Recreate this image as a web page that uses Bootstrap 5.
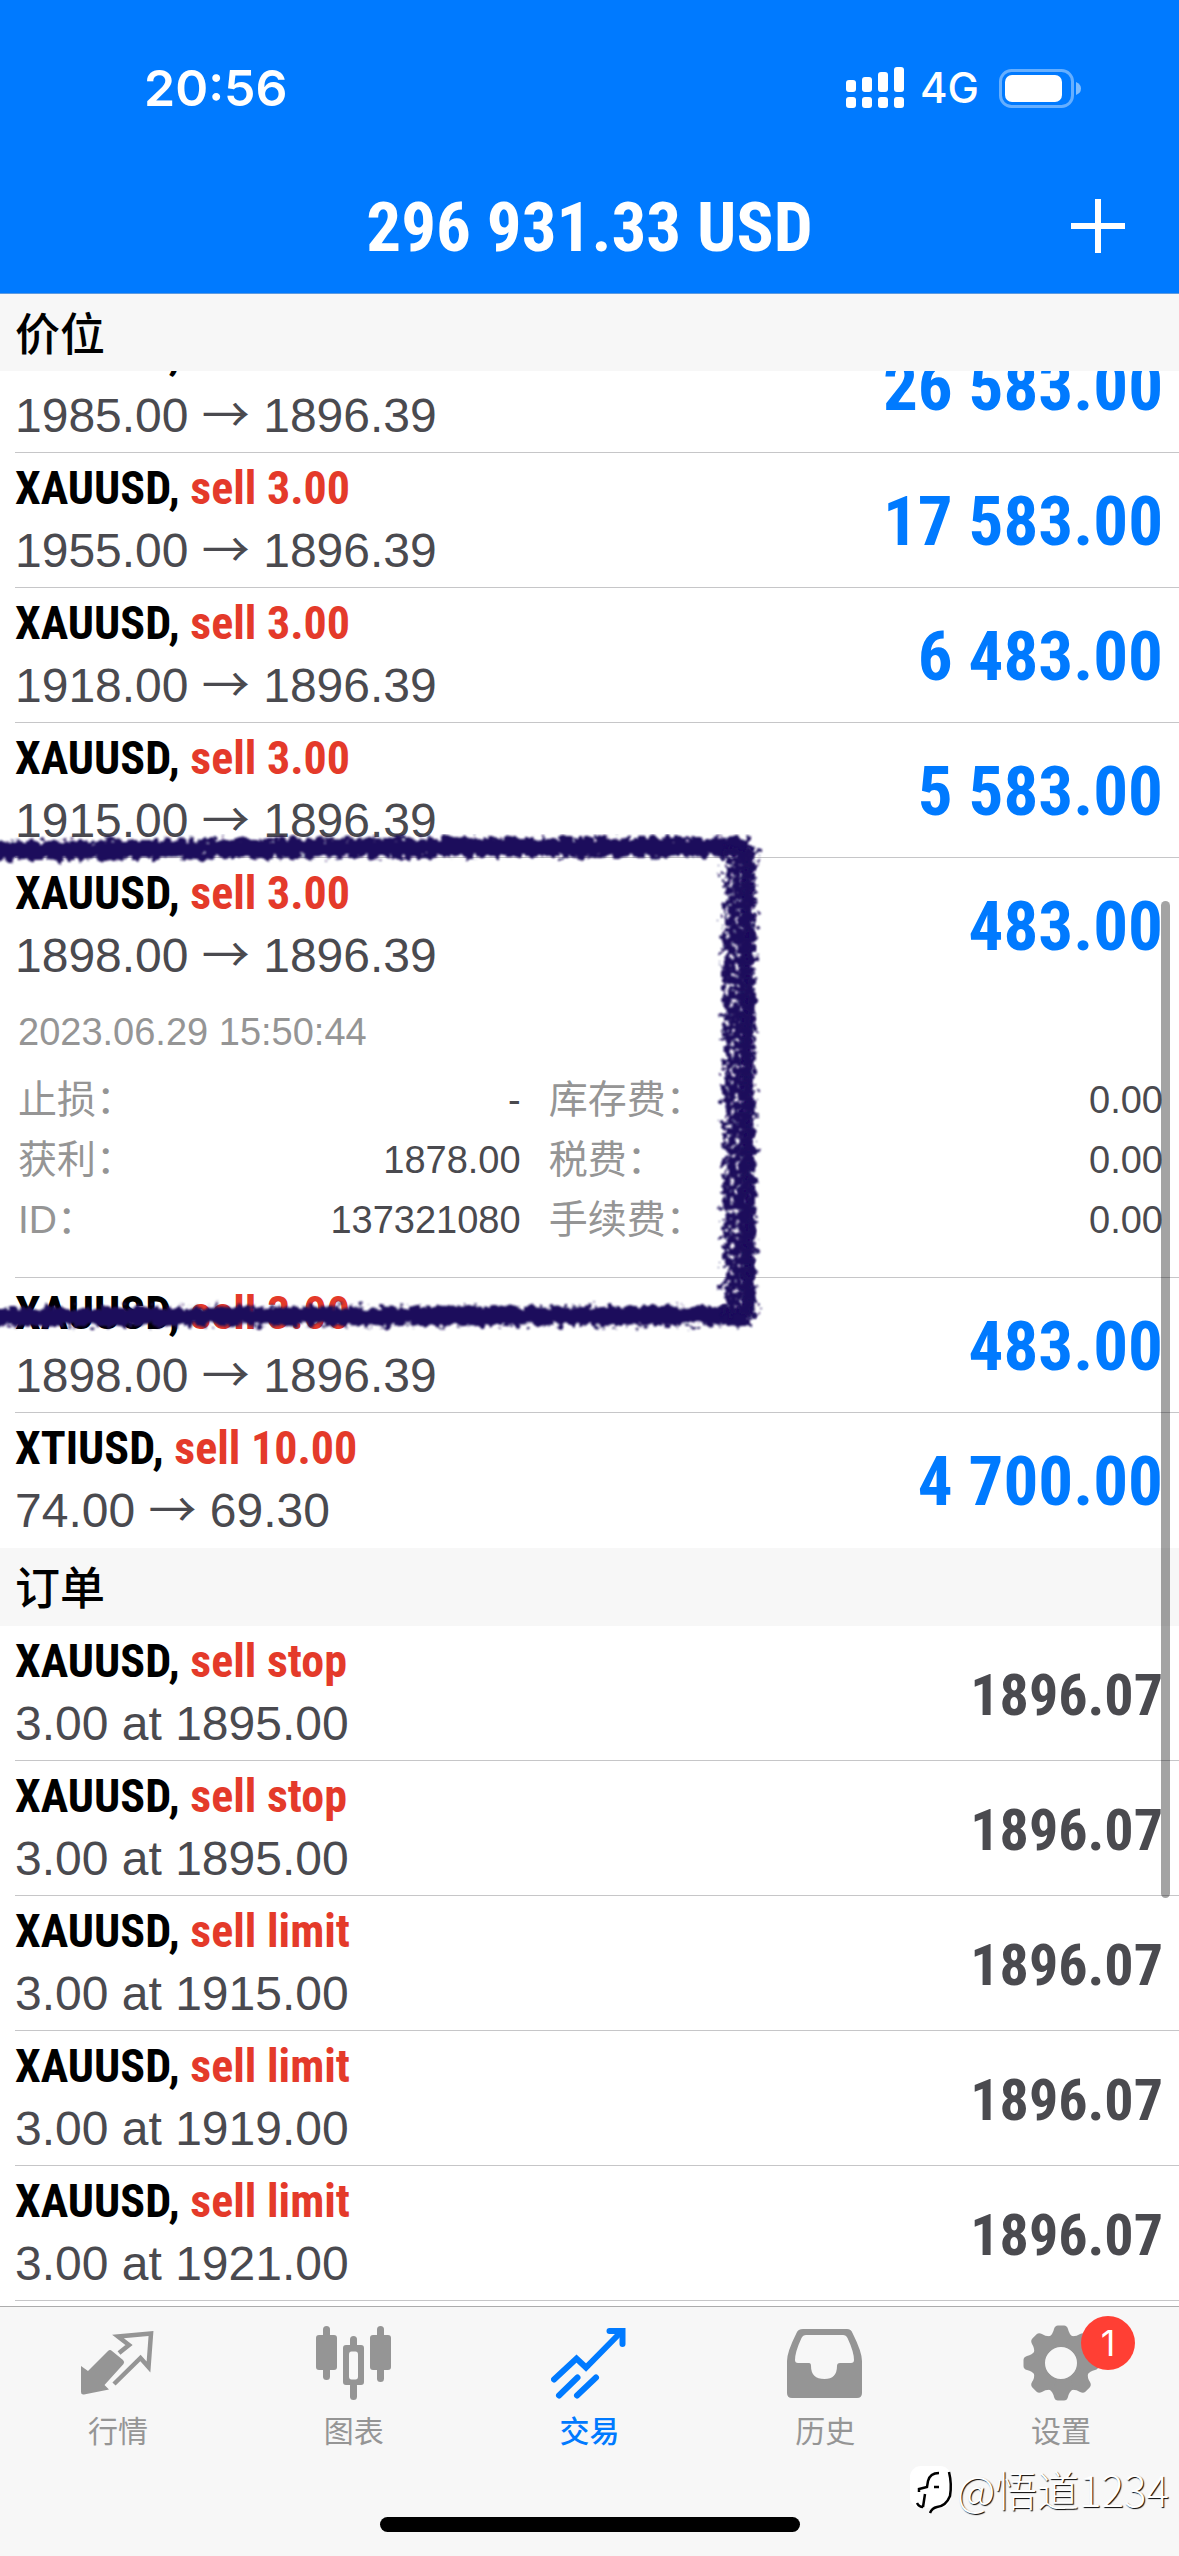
<!DOCTYPE html>
<html lang="zh-CN">
<head>
<meta charset="utf-8">
<meta name="viewport" content="width=device-width, initial-scale=1">
<title>交易</title>
<link rel="stylesheet" href="https://cdn.jsdelivr.net/npm/bootstrap@5.3.0/dist/css/bootstrap.min.css">
<style>
:root{--blue:#007aff;--red:#e43a2a;--ink:#4a4a4f;--mute:#959595;--bar:#f7f7f7}
body{font-family:"Liberation Sans","Noto Sans CJK SC",sans-serif;color:#000}
.shell{height:100vh}
.topbar{background:var(--blue);height:294px;border-bottom:1px solid #5e9be0}
.statusbar{height:176px;padding:0 98px 0 144px}
.clock{font:600 50px/60px Inter,sans-serif}
.network{font:500 42px/60px Inter,sans-serif}
.titlebar{height:104px}
.balance{font:700 69px/104px "Liberation Sans Narrow","Roboto Condensed",sans-serif}
.add-btn{right:32px}
.deal-list{min-height:0}
.section-head{background:var(--bar);height:77px;padding:0 15px;font:500 45px/76px "Noto Sans CJK SC",sans-serif}
.orders-head{height:78px}
.peek{height:82px}
.deal{margin-left:15px;padding-right:16px;height:135px;border-bottom:1px solid #c6c6c8}
.deal.last{border-color:transparent}
.deal.open{height:420px}
.deal-title{font:700 46px/62px "Liberation Sans Narrow","Roboto Condensed",sans-serif;padding-top:4px}
.side{color:var(--red)}
.deal-sub{font-size:48px;line-height:64px;color:var(--ink)}
.arrow{font-family:"Noto Sans CJK SC",sans-serif;line-height:1}
.profit,.price{font:700 69px/134px "Liberation Sans Narrow","Roboto Condensed",sans-serif;padding-top:2px;color:var(--blue)}
.price{font-size:58px;color:var(--ink)}
.facts{font-size:38px;line-height:60px;padding-left:3px;color:var(--mute)}
.facts-grid{display:grid;grid-template-columns:9fr 11fr;column-gap:28px}
.facts dt{font-weight:400;font-size:39px}
.facts dd{margin:0;color:var(--ink)}
.marker{left:0;top:-24px;width:780px;height:500px;pointer-events:none}
.scroll-thumb{right:9px;top:607px;width:9px;height:997px;border-radius:5px;background:rgba(0,0,0,.36)}
.tabbar{background:var(--bar);height:250px;border-top:1px solid #acacac}
.tab{padding-top:18px;color:var(--mute);font:400 30px/44px "Noto Sans CJK SC",sans-serif}
.tab svg{width:76px;height:76px;margin-bottom:6px}
.tab.active{color:var(--blue);font-weight:500}
.tab-icon{width:76px}
.count{left:58px;top:-9px;width:54px;height:54px;background:#ff3f34;font:400 36px/54px Inter,sans-serif}
.home-bar{bottom:24px;width:420px;height:15px}
.sign{right:10px;bottom:37px;color:#fff;font:300 42px/60px "Noto Sans CJK SC",sans-serif;text-shadow:1px 1px 1px #000}
</style>
</head>
<body>
<div class="shell d-flex flex-column overflow-hidden bg-white">
  <header class="topbar text-white flex-shrink-0">
    <div class="statusbar d-flex align-items-center justify-content-between">
      <span class="clock">20:56</span>
      <div class="d-flex align-items-center">
        <svg width="58" height="42" viewBox="0 0 58 42" fill="#fff" class="me-3" aria-hidden="true">
          <rect x="0" y="13" width="10" height="12" rx="3"/><rect x="16" y="10" width="10" height="15" rx="3"/><rect x="32" y="5" width="10" height="20" rx="3"/><rect x="48" y="0" width="10" height="25" rx="3"/>
          <rect x="0" y="30" width="10" height="11" rx="3"/><rect x="16" y="30" width="10" height="11" rx="3"/><rect x="32" y="30" width="10" height="11" rx="3"/><rect x="48" y="30" width="10" height="11" rx="3"/>
        </svg>
        <span class="network me-1">4G</span>
        <svg width="82" height="39" viewBox="0 0 82 39" class="ms-3" aria-hidden="true">
          <rect x="1.5" y="1.5" width="72" height="36" rx="11" fill="none" stroke="#fff" stroke-opacity=".4" stroke-width="3"/>
          <rect x="6" y="6" width="57" height="27" rx="7" fill="#fff"/>
          <path d="M77 13q5 2 5 6.500t-5 6.500z" fill="#fff" fill-opacity=".5"/>
        </svg>
      </div>
    </div>
    <div class="titlebar position-relative text-center">
      <h1 class="balance m-0">296 931.33 USD</h1>
      <button type="button" class="btn add-btn p-3 border-0 position-absolute top-50 translate-middle-y" aria-label="添加">
        <svg width="66" height="66" viewBox="0 0 66 66" stroke="#fff" stroke-width="6"><path d="M33 4v54M6 31h54"/></svg>
      </button>
    </div>
  </header>

  <main class="deal-list flex-fill overflow-hidden position-relative">
    <h2 class="section-head m-0">价位</h2>
    <div class="peek overflow-hidden d-flex flex-column justify-content-end">
      <div class="deal flex-shrink-0 d-flex justify-content-between"><div><div class="deal-title">XAUUSD, <span class="side">sell 3.00</span></div><div class="deal-sub">1985.00 <span class="arrow">→</span> 1896.39</div></div><div class="profit">26 583.00</div></div>
    </div>
    <div class="deal d-flex justify-content-between"><div><div class="deal-title">XAUUSD, <span class="side">sell 3.00</span></div><div class="deal-sub">1955.00 <span class="arrow">→</span> 1896.39</div></div><div class="profit">17 583.00</div></div>
    <div class="deal d-flex justify-content-between"><div><div class="deal-title">XAUUSD, <span class="side">sell 3.00</span></div><div class="deal-sub">1918.00 <span class="arrow">→</span> 1896.39</div></div><div class="profit">6 483.00</div></div>
    <div class="deal d-flex justify-content-between"><div><div class="deal-title">XAUUSD, <span class="side">sell 3.00</span></div><div class="deal-sub">1915.00 <span class="arrow">→</span> 1896.39</div></div><div class="profit">5 583.00</div></div>
    <div class="position-relative">
      <div class="deal open">
        <div class="d-flex justify-content-between"><div><div class="deal-title">XAUUSD, <span class="side">sell 3.00</span></div><div class="deal-sub">1898.00 <span class="arrow">→</span> 1896.39</div></div><div class="profit">483.00</div></div>
        <div class="facts pt-2">
          <time class="d-block mb-2">2023.06.29 15:50:44</time>
          <dl class="facts-grid m-0">
            <div class="d-flex justify-content-between"><dt>止损：</dt><dd>-</dd></div>
            <div class="d-flex justify-content-between"><dt>库存费：</dt><dd>0.00</dd></div>
            <div class="d-flex justify-content-between"><dt>获利：</dt><dd>1878.00</dd></div>
            <div class="d-flex justify-content-between"><dt>税费：</dt><dd>0.00</dd></div>
            <div class="d-flex justify-content-between"><dt>ID：</dt><dd>137321080</dd></div>
            <div class="d-flex justify-content-between"><dt>手续费：</dt><dd>0.00</dd></div>
          </dl>
        </div>
      </div>
      <svg class="marker position-absolute z-1" viewBox="0 0 780 500" fill="none" stroke="#1e0f5c" aria-hidden="true">
        <defs>
          <filter id="crayon" filterUnits="userSpaceOnUse" x="-20" y="-10" width="800" height="520">
            <feTurbulence type="fractalNoise" baseFrequency=".14" numOctaves="3" seed="4" result="n"/>
            <feDisplacementMap in="SourceGraphic" in2="n" scale="15" xChannelSelector="R" yChannelSelector="G"/>
            <feGaussianBlur stdDeviation=".9"/>
          </filter>
          <filter id="chalk" filterUnits="userSpaceOnUse" x="-20" y="-10" width="800" height="520">
            <feTurbulence type="fractalNoise" baseFrequency=".14" numOctaves="3" seed="9" result="n"/>
            <feDisplacementMap in="SourceGraphic" in2="n" scale="20" xChannelSelector="R" yChannelSelector="G" result="d"/>
            <feTurbulence type="fractalNoise" baseFrequency=".2" numOctaves="2" seed="2"/>
            <feColorMatrix values="0 0 0 0 0  0 0 0 0 0  0 0 0 0 0  0 0 0 -7 5" result="g"/>
            <feComposite in="d" in2="g" operator="in"/>
            <feGaussianBlur stdDeviation=".9"/>
          </filter>
        </defs>
        <g filter="url(#crayon)"><path d="M-10 17L300 14L750 13M-10 483L300 482L750 482" stroke-width="19"/><path d="M747 14V482" stroke-width="13"/></g>
        <path filter="url(#chalk)" d="M739 14V482" stroke-width="32"/>
      </svg>
    </div>
    <div class="deal d-flex justify-content-between"><div><div class="deal-title">XAUUSD, <span class="side">sell 3.00</span></div><div class="deal-sub">1898.00 <span class="arrow">→</span> 1896.39</div></div><div class="profit">483.00</div></div>
    <div class="deal last d-flex justify-content-between"><div><div class="deal-title">XTIUSD, <span class="side">sell 10.00</span></div><div class="deal-sub">74.00 <span class="arrow">→</span> 69.30</div></div><div class="profit">4 700.00</div></div>

    <h2 class="section-head orders-head m-0">订单</h2>
    <div class="deal d-flex justify-content-between"><div><div class="deal-title">XAUUSD, <span class="side">sell stop</span></div><div class="deal-sub">3.00 at 1895.00</div></div><div class="price">1896.07</div></div>
    <div class="deal d-flex justify-content-between"><div><div class="deal-title">XAUUSD, <span class="side">sell stop</span></div><div class="deal-sub">3.00 at 1895.00</div></div><div class="price">1896.07</div></div>
    <div class="deal d-flex justify-content-between"><div><div class="deal-title">XAUUSD, <span class="side">sell limit</span></div><div class="deal-sub">3.00 at 1915.00</div></div><div class="price">1896.07</div></div>
    <div class="deal d-flex justify-content-between"><div><div class="deal-title">XAUUSD, <span class="side">sell limit</span></div><div class="deal-sub">3.00 at 1919.00</div></div><div class="price">1896.07</div></div>
    <div class="deal d-flex justify-content-between"><div><div class="deal-title">XAUUSD, <span class="side">sell limit</span></div><div class="deal-sub">3.00 at 1921.00</div></div><div class="price">1896.07</div></div>
    <div class="scroll-thumb position-absolute z-1"></div>
  </main>

  <footer class="tabbar flex-shrink-0 position-relative">
    <nav class="d-flex">
      <a href="#" class="tab flex-fill w-100 d-flex flex-column align-items-center text-decoration-none">
        <svg viewBox="0 0 76 76" aria-hidden="true"><path fill="currentColor" d="M1 41L8 46L28 26Q30 24 32 26L43 35Q45 37 43.500 39L24.500 60L29 64.500L4 69.500Q1 70 1 67z"/><path fill="none" stroke="currentColor" stroke-width="4.500" d="M39 28L49 20L38 11.500L71 8.500L68.500 42L60.500 33L34 59"/></svg>
        行情</a>
      <a href="#" class="tab flex-fill w-100 d-flex flex-column align-items-center text-decoration-none">
        <svg viewBox="0 0 76 76" fill="currentColor" aria-hidden="true"><rect y="10" width="21" height="35" rx="3"/><rect x="7" y="1" width="7" height="54" rx="3.500"/><rect x="34" y="11" width="7" height="12" rx="3.500"/><rect x="34" y="57" width="7" height="18" rx="3.500"/><path fill-rule="evenodd" d="M30 20h15q3 0 3 3v34q0 3-3 3H30q-3 0-3-3V23q0-3 3-3zm5.500 6.500q-2.500 0-2.500 3v22q0 3 2.500 3h4q2.500 0 2.500-3v-22q0-3-2.500-3z"/><rect x="54" y="10" width="21" height="35" rx="3"/><rect x="61" y="1" width="7" height="56" rx="3.500"/></svg>
        图表</a>
      <a href="#" class="tab active flex-fill w-100 d-flex flex-column align-items-center text-decoration-none" aria-current="page">
        <svg viewBox="0 0 76 76" fill="none" stroke="currentColor" stroke-width="6" stroke-linecap="round" aria-hidden="true"><path d="M3 54.500L25.500 33.500L35 42.500L70 7"/><path d="M58.500 6H71.500V19" stroke-linejoin="miter"/><path d="M8 70.500L26.500 52.500M26 70.500L45 52.500"/></svg>
        交易</a>
      <a href="#" class="tab flex-fill w-100 d-flex flex-column align-items-center text-decoration-none">
        <svg viewBox="0 0 76 76" fill="currentColor" aria-hidden="true"><path fill-rule="evenodd" d="M16 4H60Q64 4 65.500 8Q75 27 75 36V68Q75 73 70 73H5Q0 73 0 68V36Q0 27 9.500 8Q11 4 16 4zM19 10Q16 10 14.500 13Q8 27 8 35Q8 38 11 38H22Q24 38 24 41Q24 54 37.500 54Q50 54 50 41Q50 38 53 38H64Q67 38 67 35Q67 27 60.500 13Q59 10 56 10z"/></svg>
        历史</a>
      <a href="#" class="tab flex-fill w-100 d-flex flex-column align-items-center text-decoration-none">
        <span class="tab-icon position-relative d-block">
          <svg viewBox="0 0 76 76" fill="currentColor" class="d-block" aria-hidden="true"><defs><path id="cog" d="M26 12Q30 9 31 4Q32 .5 35 .5H41Q44 .5 45 4Q46 9 50 12L48 22H28z"/></defs><circle cx="38" cy="38" r="22.500" fill="none" stroke="currentColor" stroke-width="13"/><use href="#cog"/><use href="#cog" transform="rotate(45 38 38)"/><use href="#cog" transform="rotate(90 38 38)"/><use href="#cog" transform="rotate(135 38 38)"/><use href="#cog" transform="rotate(180 38 38)"/><use href="#cog" transform="rotate(225 38 38)"/><use href="#cog" transform="rotate(270 38 38)"/><use href="#cog" transform="rotate(315 38 38)"/></svg>
          <span class="count position-absolute rounded-circle text-white text-center">1</span>
        </span>
        设置</a>
    </nav>
    <div class="home-bar position-absolute start-50 translate-middle-x bg-black rounded-pill"></div>
    <div class="sign position-absolute d-flex align-items-center">
      <svg width="48" height="50" viewBox="0 0 48 50" aria-hidden="true"><rect x="1" y="2" width="41" height="42" rx="11" fill="#fff"/><path fill="none" stroke="#000" stroke-width="2.500" d="M30 9Q21 9 19 17L18 23L10 25V28M16 30L14 43M8 39Q10 43 14 43M25 23h5M40 8Q43 20 41 32Q37 42 28 43Q23 44 21 49"/></svg>
      <span>@悟道1234</span>
    </div>
  </footer>
</div>
<script src="https://cdn.jsdelivr.net/npm/bootstrap@5.3.0/dist/js/bootstrap.bundle.min.js"></script>
</body>
</html>
